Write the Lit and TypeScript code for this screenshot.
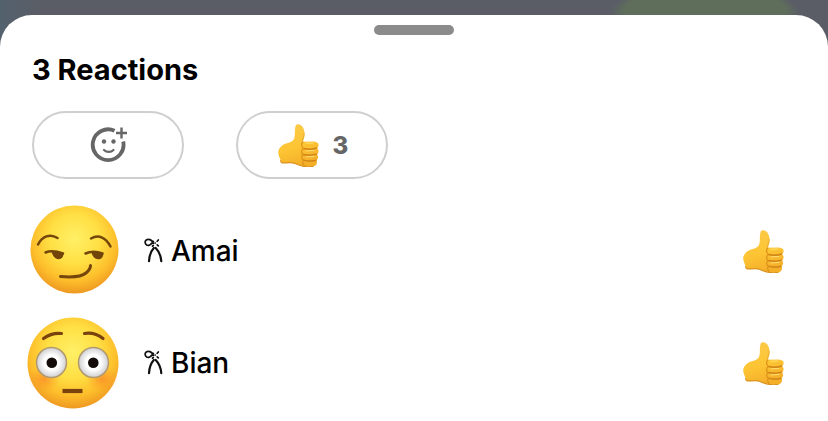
import { LitElement, html, css, svg } from "lit";
import { customElement } from "lit/decorators.js";

const thumb = () => html`<svg class="thumb" viewBox="0 0 41 43" role="img" aria-label="Thumbs up">
  <defs>
    <linearGradient id="skin" x1="0" y1="0" x2="0.3" y2="1">
      <stop offset="0" stop-color="#fbcb4c" /><stop offset="0.6" stop-color="#fdc534" /><stop offset="1" stop-color="#f5b02a" />
    </linearGradient>
  </defs>
  <path fill="url(#skin)" d="M17.500 2C18 -.3 21 -.3 23 1.200C25.500 3 26.800 7 26.600 11C26.500 14 25.300 16 24.800 17.800L34.500 17.500C38.500 17.400 41 19 40.600 21.300C40.400 23 39.800 23.700 39 24.200C41 25.200 41.200 29 39 30.200C40.600 31.700 40.400 35 38.500 36C39.700 38 38.700 41.800 35.700 42.300C30 43.200 22 42 17 39.500C12 37.600 7 39.800 3.500 38.700C3 36 -.3 31 .3 27C1.500 23 4.500 20.300 8 19.400C12 18.500 15 17.500 16.200 14.500C17.400 11 16.300 6 17.500 2Z" />
  <g fill="none" stroke-linecap="round">
    <path stroke="#cf8216" stroke-width="1.400" d="M25.500 24.500C29 25.500 35 25.200 38.500 24M25 30.500C29 31.500 35 31.200 38.500 30.200M25.500 36.200C29 37.200 35 37 38 36.200" />
    <path stroke="#dd941c" stroke-width="1.300" d="M25 18C23 19.200 23 22.800 25.500 24.500C23.200 26 23 29 25 30.500C23.200 32.500 23.500 35 25.500 36.200C24 38 24.500 40 26 41.200" />
    <path stroke="#dc941f" stroke-width="1.200" d="M2.500 36.500C2.800 38 3 38.600 4 38.800C8 39.500 12 37.600 17 39.500C22 42 30 43.200 35 42.400" />
    <path stroke="#ffdf70" stroke-width="1" d="M28 19.300L35 19M28 26.800L36 26.500M28 32.800L36 32.500" />
    <path stroke="#e9ab32" stroke-width="1" d="M26 9C26.100 13 24.800 15 24.100 17.500" />
  </g>
</svg>`;

const skinFace = svg`<defs>
  <radialGradient id="face" cx="0.5" cy="0.38" r="0.64">
    <stop offset="0" stop-color="#fff067" /><stop offset="0.45" stop-color="#ffdf43" />
    <stop offset="0.75" stop-color="#fdbe2b" /><stop offset="1" stop-color="#ec9320" />
  </radialGradient>
  <radialGradient id="blush"><stop offset="0" stop-color="#f87825" stop-opacity="0.600" /><stop offset="1" stop-color="#f88a25" stop-opacity="0" /></radialGradient>
  <radialGradient id="eye"><stop offset="0.5" stop-color="#fff" /><stop offset="1" stop-color="#cfcfd2" /></radialGradient>
</defs>`;

const smirk = () => html`<svg class="face" viewBox="0 0 92 92" aria-hidden="true">${skinFace}
  <circle cx="47.500" cy="44.500" r="44" fill="url(#face)" />
  <g fill="none" stroke="#75460c" stroke-width="2.500" stroke-linecap="round">
    <path d="M11 39.500C15 31.500 23 28 30.500 33M64 33.500C72 29 79 33 83.500 41.500" />
    <path d="M18.500 47.500C23 45.500 29 46 36 48.500M58.500 48.500C64 46 70 46.500 75.500 48.500" />
    <path stroke-width="3" d="M33.500 71.500C45 72.500 55 71.500 59 68C62 65.500 63.500 63.500 63.500 60.500" />
  </g>
  <path fill="#704507" d="M24.500 46.500L36.300 48C37 52 34.500 54.500 31.500 54.200C28 54 25.500 51 24.500 46.500ZM64.500 47L76 48C77 52 74 54.700 71 54.300C67.500 54 65 51 64.500 47Z" />
</svg>`;

const flushed = () => html`<svg class="face" viewBox="0 0 92 92" aria-hidden="true">${skinFace}
  <circle cx="46" cy="46" r="45.500" fill="url(#face)" />
  <ellipse cx="17" cy="62" rx="16" ry="13" fill="url(#blush)" />
  <ellipse cx="75" cy="62" rx="16" ry="13" fill="url(#blush)" />
  <g fill="url(#eye)" stroke="#b29a70" stroke-width="1.500">
    <circle cx="24.500" cy="45.500" r="15" /><circle cx="66.500" cy="45.500" r="15" />
  </g>
  <circle cx="24.800" cy="45.800" r="5.300" fill="#130c08" /><circle cx="66.300" cy="45.800" r="5.300" fill="#130c08" />
  <g fill="none" stroke="#7a430d" stroke-linecap="round">
    <path stroke-width="3.200" d="M16.500 21.500C22 17.500 28 15.800 34.500 16.500M57.500 16.500C64 15.500 71 17.500 76 21.500" />
    <path stroke-width="4.200" stroke-linecap="butt" d="M35.500 74H55.500" />
  </g>
</svg>`;

const bow = () => html`<svg class="bow" viewBox="0 0 20 26" aria-hidden="true">
  <g fill="none" stroke="#111" stroke-width="1.700" stroke-linecap="round">
    <path d="M9.300 5.500C8.500 1.500 3.500 .2 1.600 2.600C.2 5.200 2.500 8 5.300 7.200C7 6.600 8 5 9.300 3.500" />
    <path d="M8.500 8.200L9.300 7.500M11 5H11.200M13.200 3.300L14.300 2M13.200 6.900L14.300 7.900" />
  </g>
  <path fill="none" stroke="#111" stroke-width="2.200" stroke-linecap="round" d="M9.800 10C7 13 5.300 18 5 23.200M11.700 10C14.700 13 16.900 18 17.300 23.200" />
</svg>`;

@customElement("app-root")
export class AppRoot extends LitElement {
  static styles = css`
    :host {
      display: block;
      min-height: 100vh;
      box-sizing: border-box;
      padding-top: 15px;
      overflow: hidden;
      font-family: Inter, "Liberation Sans", sans-serif;
      color: #000;
      background: radial-gradient(ellipse 94px 28px at calc(100% - 123px) 12px, #5f6e5b 86%, transparent 100%),
        linear-gradient(90deg, #53616e, #5a5d66 40px);
    }
    .sheet {
      box-sizing: border-box;
      min-height: calc(100vh - 15px);
      padding: 10px 32px 0;
      border-radius: 32px 32px 0 0;
      background: #fff;
    }
    .grabber { width: 80px; height: 10px; margin: 0 auto; border-radius: 5px; background: #8b8b8b; }
    h1 { margin: 16px 0 22px; font-size: 29px; line-height: 38px; font-weight: 700; }
    .filters { display: flex; gap: 52px; }
    .pill {
      display: flex;
      align-items: center;
      justify-content: center;
      gap: 14px;
      box-sizing: border-box;
      width: 152px;
      height: 68px;
      padding: 0 0 0 2px;
      border: 2px solid #cfcfd1;
      border-radius: 34px;
      background: #fff;
      color: #666;
      font: 800 24px Inter, "Liberation Sans", sans-serif;
    }
    .add { width: 38px; height: 38px; }
    .thumb { width: 41px; height: 43px; flex: none; }
    ul { list-style: none; margin: 16px 0 0; padding: 0; }
    li { display: flex; align-items: center; height: 112px; padding-right: 12px; }
    .face { width: 92px; height: 92px; flex: none; margin-left: -5px; }
    .bow { width: 20px; height: 26px; margin-left: 25px; }
    .name { flex: 1; margin-left: 7px; font-size: 28px; line-height: 36px; font-weight: 500; }
  `;

  private people = [
    { name: "Amai", face: smirk },
    { name: "Bian", face: flushed },
  ];

  render() {
    return html`<main class="sheet">
      <div class="grabber"></div>
      <h1>3 Reactions</h1>
      <div class="filters">
        <button class="pill" aria-label="Add reaction">
          <svg class="add" viewBox="0 0 38 38" aria-hidden="true">
            <g fill="none" stroke="#666">
              <path stroke-width="3.800" d="M24.500 4.700A15.400 15.400 0 1 0 33.200 15.500" />
              <path stroke-width="2.400" d="M31.500 1.500V12.500M26 7H37" />
              <path stroke-width="2.200" stroke-linecap="round" d="M14 24C16.500 26.500 21 26.500 23.500 24" />
            </g>
            <circle cx="14" cy="15.500" r="2.200" fill="#666" /><circle cx="23.500" cy="15.500" r="2.200" fill="#666" />
          </svg>
        </button>
        <button class="pill">${thumb()}<span>3</span></button>
      </div>
      <ul>
        ${this.people.map((p) => html`<li>${p.face()}${bow()}<span class="name">${p.name}</span>${thumb()}</li>`)}
      </ul>
    </main>`;
  }
}
